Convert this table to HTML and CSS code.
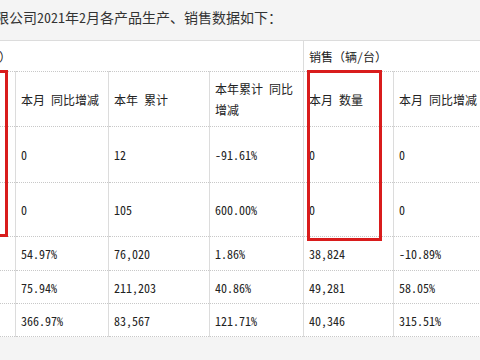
FILE: index.html
```
<!DOCTYPE html>
<html lang="zh-CN">
<head>
<meta charset="utf-8">
<title>产销数据</title>
<link rel="stylesheet" href="styles.css">
</head>
<body>
<div class="page">
  <div class="title">有限公司2021年2月各产品生产、销售数据如下：</div>
  <div class="table-wrap">
    <table class="data">
      <colgroup>
        <col class="c0"><col class="c1"><col class="c2"><col class="c3"><col class="c4"><col class="c5">
      </colgroup>
      <tr class="r-group">
        <td colspan="4">生产（辆/台）</td>
        <td colspan="2">销售（辆/台）</td>
      </tr>
      <tr class="r-head">
        <td>本月 数量</td>
        <td>本月 同比增减</td>
        <td>本年 累计</td>
        <td>本年累计 同比增减</td>
        <td>本月 数量</td>
        <td>本月 同比增减</td>
      </tr>
      <tr class="r-tall1">
        <td>0</td><td>0</td><td>12</td><td>-91.61%</td><td>0</td><td>0</td>
      </tr>
      <tr class="r-tall2">
        <td>0</td><td>0</td><td>105</td><td>600.00%</td><td>0</td><td>0</td>
      </tr>
      <tr class="r-short">
        <td>3</td><td>54.97%</td><td>76,020</td><td>1.86%</td><td>38,824</td><td>-10.89%</td>
      </tr>
      <tr class="r-short2">
        <td>4</td><td>75.94%</td><td>211,203</td><td>40.86%</td><td>49,281</td><td>58.05%</td>
      </tr>
      <tr class="r-short2">
        <td>4</td><td>366.97%</td><td>83,567</td><td>121.71%</td><td>40,346</td><td>315.51%</td>
      </tr>
    </table>
    <div class="mark mark-left"></div>
    <div class="mark mark-right"></div>
  </div>
</div>
</body>
</html>
```
FILE: styles.css
```
html, body {
  margin: 0;
  padding: 0;
  background: #f4f4f4;
  overflow: hidden;
}
body {
  width: 480px;
  height: 360px;
  font-family: "Noto Sans Mono CJK SC", "Noto Sans CJK SC", "Liberation Mono", monospace;
  font-size: 12px;
  color: #222;
}
.page {
  width: 480px;
  overflow: hidden;
}
.title {
  height: 41px;
  box-sizing: border-box;
  padding-top: 7px;
  font-size: 14px;
  line-height: 20px;
  text-indent: -19px;
  white-space: nowrap;
  border-bottom: 1px solid #dcdcdc;
  background: #f4f4f4;
  color: #333;
}
.table-wrap {
  position: relative;
}
.data {
  margin-left: -73px;
  border-collapse: collapse;
  table-layout: fixed;
  width: 566px;
  background: #fff;
}
.c0 { width: 88px; }
.c1 { width: 93px; }
.c2 { width: 101px; }
.c3 { width: 94px; }
.c4 { width: 90px; }
.c5 { width: 100px; }
.data td {
  border-left: 1px solid #dcdcdc;
  border-right: 1px solid #dcdcdc;
  border-top: 1px dotted #c8c8c8;
  border-bottom: 1px dotted #c8c8c8;
  padding: 0 4px 0 5px;
  vertical-align: middle;
  line-height: 21px;
  white-space: normal;
}
.r-group td { height: 30px; border-top: none; }
.r-head td { height: 54px; }
.r-tall1 td { height: 55px; }
.r-tall2 td { height: 53px; }
.r-short td { height: 33px; }
.r-short2 td { height: 32px; }
.mark {
  position: absolute;
  box-sizing: border-box;
  border: 3px solid #d91c1c;
}
.mark-left {
  left: -60px;
  top: 29px;
  width: 68px;
  height: 167px;
}
.mark-right {
  left: 307px;
  top: 29px;
  width: 75px;
  height: 171px;
}
```
